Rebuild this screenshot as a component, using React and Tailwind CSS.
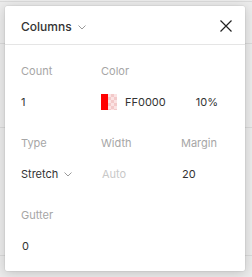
import React from "react";

function Chevron({ className = "" }) {
  return (
    <svg width="8" height="5" viewBox="0 0 8 5" className={className} fill="none">
      <path d="M0.5 0.5 L4 4 L7.5 0.5" stroke="#9a9a9a" strokeWidth="1" />
    </svg>
  );
}

function Field({ label, children }) {
  return (
    <div className="flex flex-col">
      <div className="h-[16px] leading-[16px] text-[11px] text-[#a6a6a6]">{label}</div>
      <div className="mt-[15px] h-[16px] leading-[16px] text-[11px] text-[#333] flex items-center">{children}</div>
    </div>
  );
}

export default function App() {
  return (
    <div
      className="relative w-[252px] h-[277px] overflow-hidden bg-[#ececec]"
      style={{ fontFamily: "Inter, 'Noto Sans', sans-serif" }}
    >
      {/* background panel rows */}
      <div className="absolute inset-0 flex flex-col">
        <div className="h-[2px] border-b border-[#dadada]" />
        <div className="h-[42px] border-b border-[#dadada]" />
        <div className="h-[84px] border-b border-[#dadada]" />
        <div className="h-[128px] border-b border-[#dadada]" />
      </div>

      {/* popup card */}
      <div className="absolute left-[5px] top-[6px] w-[240px] h-[265px] bg-white rounded-[2px] shadow-[0_2px_12px_rgba(0,0,0,0.18),0_0_0_0.5px_rgba(0,0,0,0.08)] flex flex-col">
        <div className="h-[39px] shrink-0 border-b border-[#e5e5e5] flex items-center pl-[16px] pr-[13px]">
          <div className="flex items-center gap-[6px] mt-[3px]">
            <span className="text-[12px] font-medium text-[#333] leading-[16px]">Columns</span>
            <Chevron className="mt-[1px]" />
          </div>
          <div className="flex-1" />
          <svg width="12" height="12" viewBox="0 0 12 12" fill="none" className="mt-[1px]">
            <path d="M0.5 0.5 L11.5 11.5 M11.5 0.5 L0.5 11.5" stroke="#222" strokeWidth="1.2" />
          </svg>
        </div>

        <div className="pl-[16px] pt-[18px] flex flex-col gap-[25px]">
          <div className="grid grid-cols-[80px_140px]">
            <Field label="Count">1</Field>
            <Field label="Color">
              <div className="flex items-center w-full">
                <div className="w-[16px] h-[16px] flex">
                  <div className="w-[7px] h-[16px] bg-[#ff0000]" />
                  <div
                    className="w-[9px] h-[16px] bg-[#fbe3e3]"
                    style={{
                      backgroundImage:
                        "linear-gradient(45deg,#f3caca 25%,transparent 25%,transparent 75%,#f3caca 75%),linear-gradient(45deg,#f3caca 25%,transparent 25%,transparent 75%,#f3caca 75%)",
                      backgroundSize: "6px 6px",
                      backgroundPosition: "0 0,3px 3px",
                    }}
                  />
                </div>
                <span className="ml-[8px]">FF0000</span>
                <span className="ml-[30px]">10%</span>
              </div>
            </Field>
          </div>

          <div className="grid grid-cols-[80px_80px_60px]">
            <Field label="Type">
              <span>Stretch</span>
              <Chevron className="ml-[6px] mt-[1px]" />
            </Field>
            <Field label="Width">
              <span className="text-[#c8c8c8] pl-[1px]">Auto</span>
            </Field>
            <Field label="Margin">
              <span className="pl-[1px]">20</span>
            </Field>
          </div>

          <div className="grid grid-cols-[80px]">
            <Field label="Gutter">
              <span className="pl-[1px]">0</span>
            </Field>
          </div>
        </div>
      </div>
    </div>
  );
}
